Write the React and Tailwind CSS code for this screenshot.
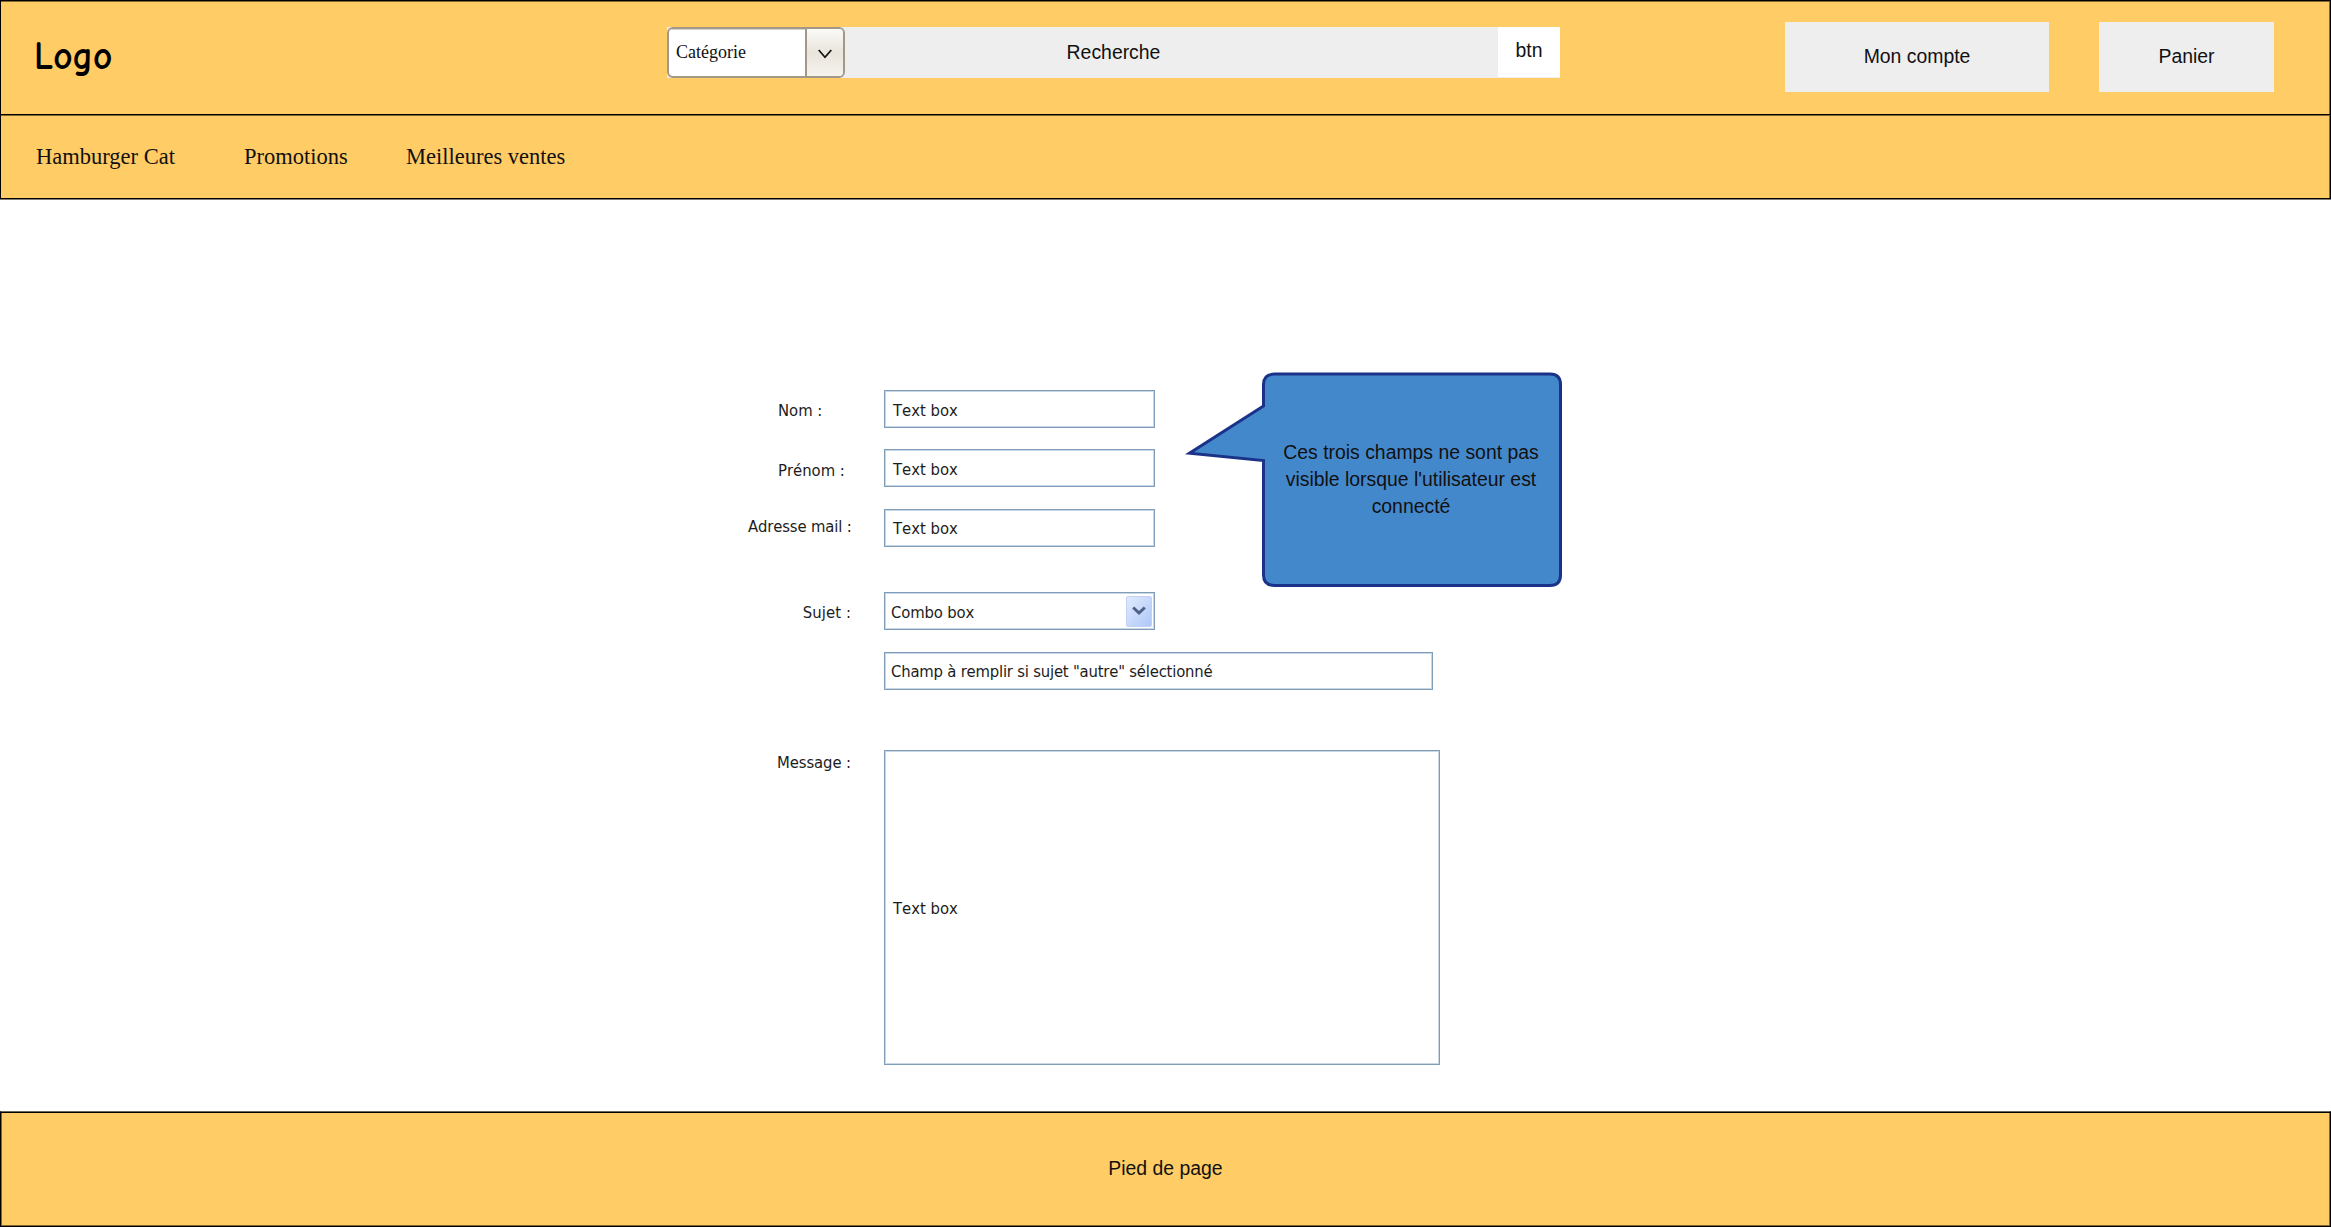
const ui = "font-['DejaVu_Sans_Condensed','DejaVu_Sans',sans-serif] [font-stretch:condensed] [font-kerning:none] text-[16.5px] leading-[24px] whitespace-nowrap text-[#1c1c1c]";
const frame = "border border-[#7f9db9] shadow-[inset_0_0_0_1px_#c9d7e5] bg-white";

function Header() {
  return (
    <header className="border-x border-t border-black bg-[#ffcc66]">
      <div className="flex h-[113px] items-start shadow-[inset_0_1px_0_#7f6633,inset_-1px_0_0_#7f6633]">
        <div className="w-[666px] pt-[30px] pl-[33px]">
          <span className="inline-block origin-left scale-x-[0.91] font-['Comic_Sans_MS','Comic_Neue','Noto_Sans',sans-serif] text-[41px] leading-[50px] font-bold text-black">
            Logo
          </span>
        </div>
        <div className="mt-[26px] flex h-[51px] w-[893px] bg-[#eeeeee]">
          <div className="flex w-[178px] overflow-hidden rounded-[6px] border-2 border-[#a39888] bg-white">
            <div className="flex flex-1 items-center border-r-2 border-[#a39888] pl-[7px] font-['Liberation_Serif',serif] text-[18px] shadow-[inset_0_1px_0_#d8d4cc]">
              Catégorie
            </div>
            <div className="flex w-[36px] items-center justify-center bg-linear-to-b from-[#fbfaf8] via-[#e9e5dd] to-[#f5f3ed]">
              <svg className="mt-[2px] h-[10px] w-[14px]" viewBox="0 0 14 10" fill="none" stroke="#111" strokeWidth="1.7">
                <path d="M0.7 1 L7 8.3 L13.3 1" />
              </svg>
            </div>
          </div>
          <div className="flex flex-1 items-center justify-center pr-[116px]">Recherche</div>
          <div className="flex h-[50px] w-[62px] items-center justify-center bg-white pb-[3px]">btn</div>
        </div>
        <div className="mt-[21px] ml-[225px] flex h-[70px] w-[264px] items-center justify-center bg-[#eeeeee]">Mon compte</div>
        <div className="mt-[21px] ml-[50px] flex h-[70px] w-[175px] items-center justify-center bg-[#eeeeee]">Panier</div>
      </div>
      <nav className="flex h-[84px] items-center border-t border-black pl-[35px] font-['Liberation_Serif',serif] text-[22.5px] shadow-[inset_0_1px_0_#7f6633,inset_-1px_0_0_#7f6633]">
        <span className="w-[208px]">Hamburger Cat</span>
        <span className="w-[162px]">Promotions</span>
        <span>Meilleures ventes</span>
      </nav>
      <div className="-mx-px h-[2px] border-b border-b-[#807d78] bg-black" />
    </header>
  );
}

function Row({ label, labelClass, className, children }) {
  return (
    <div className={"flex " + className}>
      <div className={"w-[136px] shrink-0 " + labelClass + " " + ui}>{label}</div>
      {children}
    </div>
  );
}

function Box({ className, children }) {
  return <div className={"flex items-center " + frame + " " + ui + " " + className}>{children}</div>;
}

function Callout() {
  return (
    <div className="absolute top-[172px] left-[1184px] h-[216px] w-[380px]">
      <svg className="absolute inset-0 h-full w-full" viewBox="0 0 380 216">
        <path
          d="M90.5 2 H366 Q376.5 2 376.5 12.5 V203 Q376.5 213.5 366 213.5 H90.5 Q79.5 213.5 79.5 203 V88.5 L5.5 81.2 L79.5 34 V12.5 Q79.5 2 90.5 2 Z"
          fill="#4488cc"
          stroke="#1a3388"
          strokeWidth="3"
          strokeMiterlimit="10"
        />
      </svg>
      <p className="relative mt-[67px] ml-[79px] w-[296px] text-center leading-[27px]">
        Ces trois champs ne sont pas
        <br />
        visible lorsque l'utilisateur est
        <br />
        connecté
      </p>
    </div>
  );
}

export default function App() {
  return (
    <div className="flex h-[1227px] w-[2331px] flex-col bg-white font-['Liberation_Sans',Arial,sans-serif] text-[19.4px] text-[#111]">
      <Header />
      <main className="relative flex-1 pl-[748px]">
        <Row className="mt-[190px]" label="Nom :" labelClass="pl-[30px] pt-[9px]">
          <Box className="h-[38px] w-[271px] pt-[3px] pl-[8px]">Text box</Box>
        </Row>
        <Row className="mt-[21px]" label="Prénom :" labelClass="pl-[30px] pt-[10px]">
          <Box className="h-[38px] w-[271px] pt-[3px] pl-[8px]">Text box</Box>
        </Row>
        <Row className="mt-[22px]" label="Adresse mail :" labelClass="tracking-[-0.15px] pt-[6px]">
          <Box className="h-[38px] w-[271px] pt-[2px] pl-[8px]">Text box</Box>
        </Row>
        <Row className="mt-[45px]" label="Sujet :" labelClass="tracking-[0.1px] pr-[33px] pt-[9px] text-right">
          <Box className="h-[38px] w-[271px] pr-[2px] pl-[6px] tracking-[-0.15px]">
            <span className="flex-1 pt-[3px]">Combo box</span>
            <span className="flex h-[31px] w-[26px] items-center justify-center rounded-[2px] border border-[#c3d0f5] bg-linear-to-br from-[#e1eafe] to-[#aec8f7]">
              <svg className="h-[10px] w-[14px]" viewBox="0 0 14 10" fill="none" stroke="#4d6185" strokeWidth="3">
                <path d="M1.2 1.5 L7 7 L12.8 1.5" />
              </svg>
            </span>
          </Box>
        </Row>
        <Box className="mt-[22px] ml-[136px] h-[38px] w-[549px] pt-[2px] pl-[6px] tracking-[-0.2px]">
          Champ à remplir si sujet "autre" sélectionné
        </Box>
        <Row className="mt-[60px]" label="Message :" labelClass="tracking-[-0.1px] pr-[33px] pt-[1px] text-right">
          <Box className="h-[315px] w-[556px] pt-[3px] pl-[8px]">Text box</Box>
        </Row>
        <Callout />
      </main>
      <footer className="flex h-[116px] items-center justify-center border border-t-[#6b675f] border-black bg-[#ffcc66] shadow-[inset_0_1px_0_#000,inset_0_-1px_0_#7f6633,inset_1px_0_0_#7f6633,inset_-1px_0_0_#7f6633]">
        Pied de page
      </footer>
    </div>
  );
}
